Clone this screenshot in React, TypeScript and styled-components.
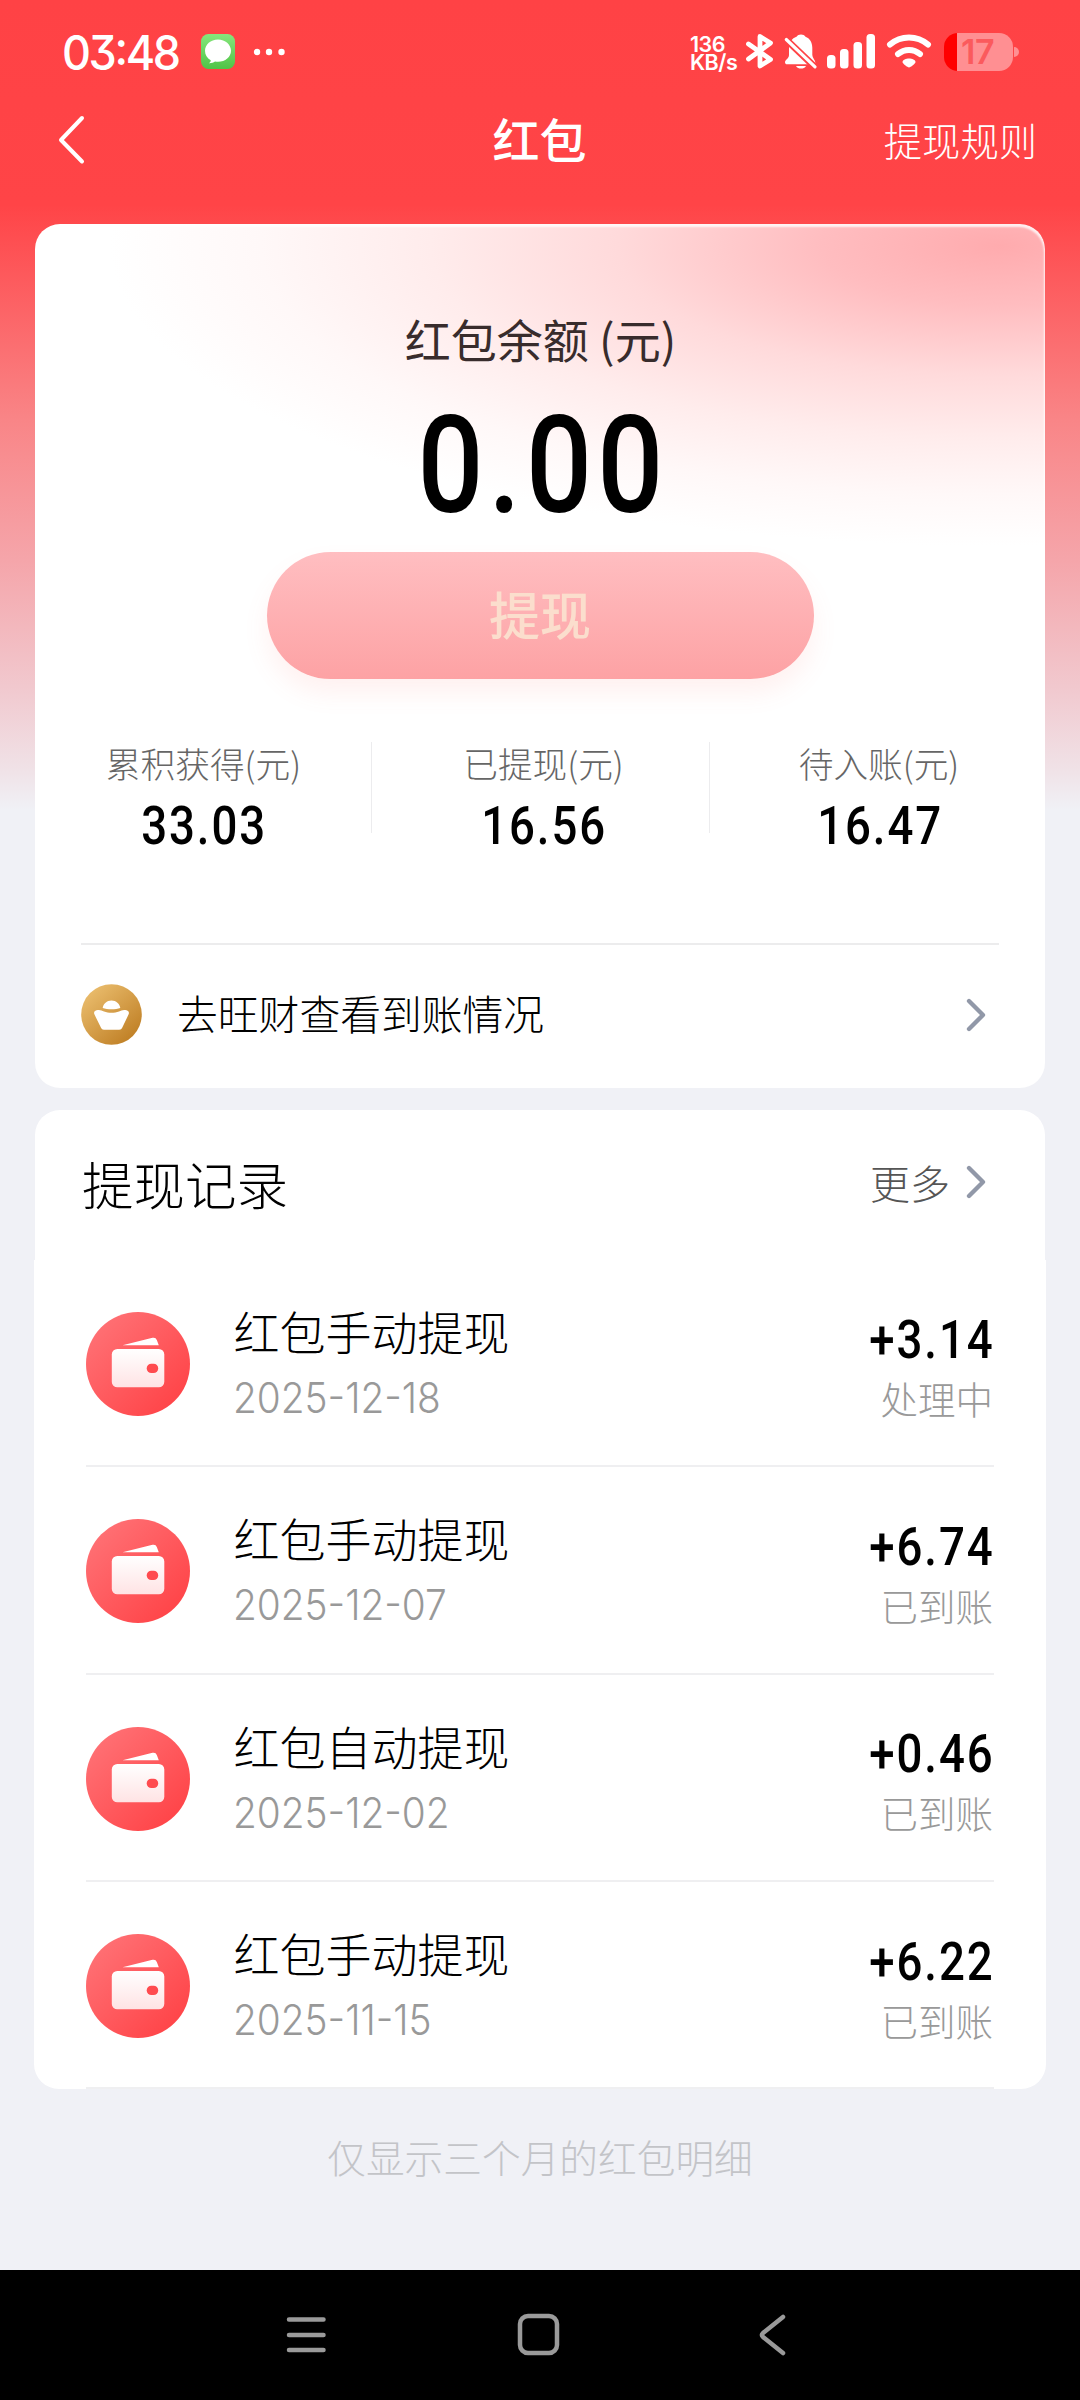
import React from "react";
import styled, { createGlobalStyle } from "styled-components";

const cjk = `"Noto Sans CJK SC", sans-serif`;

const Global = createGlobalStyle`
  *, *::before, *::after { box-sizing: border-box; }
  body { margin: 0; background: #f0f1f6; }
`;

const Screen = styled.div`
  width: 1080px;
  height: 2400px;
  display: flex;
  flex-direction: column;
  overflow: hidden;
  background: linear-gradient(180deg, #ff4245 0, #ff4447 205px, #f98587 420px, #f5a5aa 560px, #f1c9cf 690px, #f0e2e7 770px, #f0f1f6 810px);
  font-family: ${cjk};
  color: #000;
`;

const StatusBar = styled.header`
  display: flex;
  align-items: center;
  justify-content: space-between;
  height: 104px;
  padding: 0 61px 0 62px;
  color: #fff;
`;

const StatusGroup = styled.div`
  display: flex;
  align-items: center;
`;

const Clock = styled.span`
  font: 500 47.5px/60px Inter, sans-serif;
  font-feature-settings: "cv09", "calt";
  width: 139px;
  padding-top: 1px;
  letter-spacing: -2.5px;
  transform: scaleX(0.945);
  transform-origin: left;
`;

const NetSpeed = styled.div`
  width: 56px;
  padding-top: 2px;
  font: 600 21.5px/18.5px Inter, sans-serif;
  letter-spacing: -0.5px;
`;

const Battery = styled.div`
  position: relative;
  display: flex;
  align-items: center;
  width: 69px;
  height: 38px;
  margin-right: 6px;
  padding-left: 17px;
  border-radius: 14px;
  background: linear-gradient(90deg, #ff0000 13px, #ff8f92 13px);
  color: #fb5a5d;
  font: 600 34px/38px Inter, sans-serif;
  letter-spacing: -0.5px;

  &::after {
    content: "";
    position: absolute;
    right: -6px;
    top: 14px;
    width: 5px;
    height: 10px;
    border-radius: 0 5px 5px 0;
    background: #ff8f92;
  }
`;

const TitleBar = styled.nav`
  display: grid;
  grid-template-columns: 1fr auto 1fr;
  align-items: center;
  height: 71px;
  margin-bottom: 49px;
  padding: 0 43px 0 56px;
  color: #fff;
`;

const PageTitle = styled.h1`
  margin: -3px 0 0;
  transform: translateX(-7px);
  font-size: 47px;
  font-weight: 500;
  line-height: 60px;
`;

const RulesLink = styled.a`
  justify-self: end;
  font-size: 38.3px;
  font-weight: 300;
  line-height: 60px;
`;

const BalanceCard = styled.section`
  display: flex;
  flex-direction: column;
  align-items: center;
  height: 864px;
  margin: 0 35px 22px;
  border-radius: 25px;
  background:
    radial-gradient(ellipse 890px 300px at 965px 22px, #ffabae 0%, #ffbdc0 20%, #ffdadb 43%, #ffecec 64%, #fff8f8 83%, rgba(255, 255, 255, 0) 100%),
    #fff;
  box-shadow: inset -1px 3px 2px rgba(255, 255, 255, 0.8);
`;

const BalanceLabel = styled.div`
  margin-top: 81px;
  padding-left: 1px;
  color: #382c2c;
  font-size: 46px;
  font-weight: 400;
  line-height: 66px;
`;

const Digits = styled.span<{ $size: number; $gap: number; $origin?: string }>`
  display: inline-block;
  font-family: Roboto, sans-serif;
  font-weight: 500;
  font-size: ${(p) => p.$size}px;
  line-height: 1;
  letter-spacing: ${(p) => p.$gap}px;
  margin-right: ${(p) => -p.$gap}px;
  transform: scaleX(0.86);
  transform-origin: ${(p) => p.$origin ?? "center"};
`;

const Balance = styled.div`
  display: flex;
  justify-content: center;
  height: 135px;
  margin-top: 28px;
`;

const WithdrawButton = styled.button`
  width: 547px;
  height: 127px;
  margin-top: 18px;
  padding: 0 0 5px;
  border: 0;
  border-radius: 64px;
  background: linear-gradient(180deg, #ffbec1, #fda2a4);
  box-shadow: 0 14px 24px rgba(255, 120, 110, 0.1);
  color: #fbdecd;
  font-family: ${cjk};
  font-size: 51px;
  font-weight: 500;
  line-height: 1;
`;

const Stats = styled.div`
  display: grid;
  grid-template-columns: 337px 338px 1fr;
  align-self: stretch;
  height: 91px;
  margin-top: 63px;
`;

const Stat = styled.div`
  display: flex;
  flex-direction: column;
  align-items: center;
  height: 91px;
  border-right: 1px solid #ececee;

  &:first-child { padding-left: 1px; }
  & + & { padding-left: 6px; }
  &:last-child { border-right: 0; padding-left: 3px; }
`;

const StatLabel = styled.span`
  margin-top: -2px;
  color: #666;
  font-size: 34.7px;
  font-weight: 300;
  line-height: 46px;
`;

const StatValue = styled.div`
  height: 53px;
  margin-top: 14px;
`;

const AccountLink = styled.a`
  display: flex;
  align-items: center;
  align-self: stretch;
  height: 144px;
  margin: 110px 46px 0;
  padding: 0 13px 3px 0;
  border-top: 2px solid #ececed;
  font-size: 40.8px;
  font-weight: 300;
`;

const AccountText = styled.span`
  flex: 1;
  margin-top: -3px;
  padding-left: 35px;
  line-height: 60px;
`;

const RecordsHeader = styled.header`
  display: flex;
  align-items: center;
  justify-content: space-between;
  height: 150px;
  margin: 0 35px;
  padding: 0 59px 5px 47px;
  border-radius: 25px 25px 0 0;
  background: #fff;
`;

const RecordsTitle = styled.h2`
  margin: 0;
  font-size: 51.5px;
  font-weight: 300;
  line-height: 70px;
`;

const MoreLink = styled.a`
  display: flex;
  align-items: center;
  gap: 16px;
  margin-bottom: 2px;
  color: #555;
  font-size: 40px;
  font-weight: 300;
  line-height: 60px;
`;

const RecordList = styled.ul`
  margin: 0 34px;
  padding: 0 52px;
  border-radius: 0 0 25px 25px;
  background: #fff;
  list-style: none;
`;

const Record = styled.li`
  display: flex;
  align-items: center;
  height: 207.33px;
  padding-top: 3px;
  border-bottom: 2px solid #efeff1;
`;

const RecordText = styled.div<{ $end?: boolean }>`
  display: flex;
  flex-direction: column;
  align-items: ${(p) => (p.$end ? "flex-end" : "flex-start")};
  flex: ${(p) => (p.$end ? "none" : "1")};
  padding-top: ${(p) => (p.$end ? 10 : 2)}px;
  padding-left: ${(p) => (p.$end ? 0 : 43.5)}px;
  padding-right: ${(p) => (p.$end ? 2 : 0)}px;
`;

const RecordName = styled.span`
  margin-top: -4px;
  font-size: 46px;
  font-weight: 300;
  line-height: 60px;
`;

const RecordDate = styled.span`
  color: #999;
  font: 300 42.5px/56px Inter, sans-serif;
  transform: scaleX(0.913);
  transform-origin: left;
  margin-top: 10px;
  margin-left: -1px;
`;

const RecordStatus = styled.span`
  margin-top: 4px;
  margin-right: -1px;
  color: #999;
  font-size: 37.5px;
  font-weight: 300;
  line-height: 54px;
`;

const RangeNote = styled.p`
  flex: 1;
  margin: 0;
  padding-top: 39px;
  color: #c3c4c8;
  font-size: 38.7px;
  font-weight: 300;
  line-height: 56px;
  text-align: center;
`;

const NavBar = styled.footer`
  display: flex;
  align-items: center;
  height: 130px;
  padding-left: 285px;
  background: #000;
`;

const NavIcon = styled.svg`
  width: 44px;
  height: 44px;
  margin-right: 188px;
  fill: none;
  stroke: #9a9a9a;
  stroke-width: 4.5;
  stroke-linecap: round;
  stroke-linejoin: round;
`;

const MessageIcon = () => (
  <svg width="35" height="36" viewBox="0 0 35 36">
    <defs>
      <linearGradient id="msg" x1="0" y1="0" x2="0" y2="1">
        <stop offset="0" stopColor="#86e67c" />
        <stop offset="1" stopColor="#50c447" />
      </linearGradient>
    </defs>
    <rect width="34" height="35" rx="7.5" fill="url(#msg)" />
    <path d="M17 5.500c-7.300 0-13 5-13 11.300 0 4 2.200 7.400 5.700 9.400.2 1-.5 2-1.700 3 2.300.1 4.400-.6 6-1.700 1 .2 2 .3 3 .3 7.300 0 13-4.900 13-11S24.300 5.500 17 5.500z" fill="#fff" />
  </svg>
);

const StatusIcons = () => (
  <svg width="198" height="38" viewBox="746 33 198 38" fill="none">
    <path d="M748.500 44 770.500 59.500l-10.500 6.500V36.500l10.500 6.500-22 16" stroke="#fff" strokeWidth="4.800" strokeLinecap="round" strokeLinejoin="round" />
    <path d="M801 34.500c2 0 3.500.8 4.500 2.300 4.200 1.500 6.800 5.500 6.800 11v7.200c0 3 3 5 3 7.500 0 1.300-.8 1.800-2 1.800h-26c-1.600 0-2.300-.8-2.300-2.300 0-2 4-3.500 4-7v-7.200c0-5.500 3-9.500 7.500-11 1-1.500 2.500-2.300 4.500-2.300z" fill="#fff" />
    <path d="M796 66h10c-1 1.800-3 2.600-5 2.600s-4-.8-5-2.600z" fill="#fff" />
    <path d="M784 37.500 817 69" stroke="#ff4346" strokeWidth="6.800" />
    <path d="M786.300 39.500 815 66.800" stroke="#fff" strokeWidth="3.200" strokeLinecap="round" />
    <g fill="#fff">
      <rect x="827" y="55" width="8.500" height="13.500" rx="3.500" />
      <rect x="840" y="49" width="8.500" height="19.500" rx="3.500" />
      <rect x="853.500" y="42" width="8.500" height="26.500" rx="3.500" />
      <rect x="866.500" y="34" width="8.500" height="34.500" rx="3.500" />
    </g>
    <g stroke="#fff" strokeWidth="6" strokeLinecap="round">
      <path d="M890 44.500c11-9.500 27-9.500 38 0" />
      <path d="M898 54c6.500-5.500 15.500-5.500 22 0" />
    </g>
    <path d="M909 58.500c3 0 6.500 1.500 6.500 3.500 0 1.500-5 5.500-6.500 5.500s-6.500-4-6.500-5.500c0-2 3.500-3.500 6.500-3.500z" fill="#fff" />
  </svg>
);

const Chevron = () => (
  <svg width="20" height="34" viewBox="0 0 20 34" fill="none" stroke="#9198a8" strokeWidth="4.300" strokeLinecap="round" strokeLinejoin="round">
    <path d="M3 3 17 17 3 31" />
  </svg>
);

const IngotIcon = () => (
  <svg width="61" height="61" viewBox="0 0 61 61">
    <defs>
      <linearGradient id="gold" x1="0.15" y1="0.1" x2="0.85" y2="0.9">
        <stop offset="0" stopColor="#e9bb6b" />
        <stop offset="1" stopColor="#c08026" />
      </linearGradient>
    </defs>
    <circle cx="30.500" cy="30.500" r="30.300" fill="url(#gold)" />
    <path d="M21.700 24c.6-4.300 4.200-7.500 8.800-7.500s8.200 3.200 8.800 7.500c-4.500 1.800-13 1.800-17.600 0z" fill="#fff" />
    <path d="M15.500 26.300c3.500-.8 5 .2 7.500 1.200 4.500 1.800 10.500 1.800 15 0 2.500-1 4-2 7.500-1.200 2.200.5 3 2.300 2 4.300l-6.300 13.200c-.6 1.300-1.500 1.900-3 1.900H23c-1.500 0-2.400-.6-3-1.900L13.500 30.600c-1-2-.2-3.800 2-4.300z" fill="#fff" />
  </svg>
);

const WalletIcon = () => (
  <svg width="104" height="104" viewBox="0 0 104 104">
    <defs>
      <linearGradient id="disc" x1="0.1" y1="0.1" x2="0.9" y2="0.9">
        <stop offset="0" stopColor="#ff7175" />
        <stop offset="1" stopColor="#ff4347" />
      </linearGradient>
      <linearGradient id="purse" x1="0" y1="0" x2="0" y2="1">
        <stop offset="0" stopColor="#fff" />
        <stop offset="1" stopColor="#ffe3e4" />
      </linearGradient>
    </defs>
    <circle cx="52" cy="52" r="52" fill="url(#disc)" />
    <path d="M36.500 33.300 66.500 25.800c2.200-.5 3.600.3 4.300 2.300l2 5.200z" fill="#fff" />
    <rect x="25.800" y="37" width="52.500" height="38.300" rx="5.500" fill="url(#purse)" />
    <rect x="60.700" y="51.700" width="11.500" height="9.300" rx="4.600" fill="#ff4b4f" />
  </svg>
);

const stats = [
  { label: "累积获得(元)", value: "33.03" },
  { label: "已提现(元)", value: "16.56" },
  { label: "待入账(元)", value: "16.47" },
];

const records = [
  { name: "红包手动提现", date: "2025-12-18", amount: "+3.14", status: "处理中" },
  { name: "红包手动提现", date: "2025-12-07", amount: "+6.74", status: "已到账" },
  { name: "红包自动提现", date: "2025-12-02", amount: "+0.46", status: "已到账" },
  { name: "红包手动提现", date: "2025-11-15", amount: "+6.22", status: "已到账" },
];

export default function App() {
  return (
    <>
      <Global />
      <Screen>
        <StatusBar>
          <StatusGroup>
            <Clock>03:48</Clock>
            <MessageIcon />
            <svg width="50" height="10" viewBox="236 47 50 10" fill="#fff">
              <circle cx="257" cy="52" r="3.200" />
              <circle cx="269" cy="52" r="3.200" />
              <circle cx="281.500" cy="52" r="3.200" />
            </svg>
          </StatusGroup>
          <StatusGroup>
            <NetSpeed>136 KB/s</NetSpeed>
            <StatusIcons />
            <Battery>17</Battery>
          </StatusGroup>
        </StatusBar>

        <TitleBar>
          <svg width="30" height="50" viewBox="0 0 30 50" fill="none" stroke="#fff" strokeWidth="4" strokeLinecap="round" strokeLinejoin="round">
            <path d="M26 3 5 25 26 46.500" />
          </svg>
          <PageTitle>红包</PageTitle>
          <RulesLink>提现规则</RulesLink>
        </TitleBar>

        <BalanceCard>
          <BalanceLabel>红包余额 (元)</BalanceLabel>
          <Balance>
            <Digits $size={135} $gap={6}>0.00</Digits>
          </Balance>
          <WithdrawButton>提现</WithdrawButton>
          <Stats>
            {stats.map((s) => (
              <Stat key={s.label}>
                <StatLabel>{s.label}</StatLabel>
                <StatValue>
                  <Digits $size={53} $gap={2.2}>{s.value}</Digits>
                </StatValue>
              </Stat>
            ))}
          </Stats>
          <AccountLink>
            <IngotIcon />
            <AccountText>去旺财查看到账情况</AccountText>
            <Chevron />
          </AccountLink>
        </BalanceCard>

        <RecordsHeader>
          <RecordsTitle>提现记录</RecordsTitle>
          <MoreLink>
            更多
            <Chevron />
          </MoreLink>
        </RecordsHeader>
        <RecordList>
          {records.map((r) => (
            <Record key={r.date}>
              <WalletIcon />
              <RecordText>
                <RecordName>{r.name}</RecordName>
                <RecordDate>{r.date}</RecordDate>
              </RecordText>
              <RecordText $end>
                <Digits $size={53} $gap={2.2} $origin="right">{r.amount}</Digits>
                <RecordStatus>{r.status}</RecordStatus>
              </RecordText>
            </Record>
          ))}
        </RecordList>
        <RangeNote>仅显示三个月的红包明细</RangeNote>

        <NavBar>
          <NavIcon viewBox="0 0 44 44">
            <path d="M4 6.500H38.500M4 22H38.500M4 37H38.500" />
          </NavIcon>
          <NavIcon viewBox="0 0 44 44">
            <rect x="3" y="3" width="37" height="37" rx="8" />
          </NavIcon>
          <NavIcon viewBox="0 0 44 44">
            <path d="M34 4 14 20Q12 22 14 24L34 40" />
          </NavIcon>
        </NavBar>
      </Screen>
    </>
  );
}
